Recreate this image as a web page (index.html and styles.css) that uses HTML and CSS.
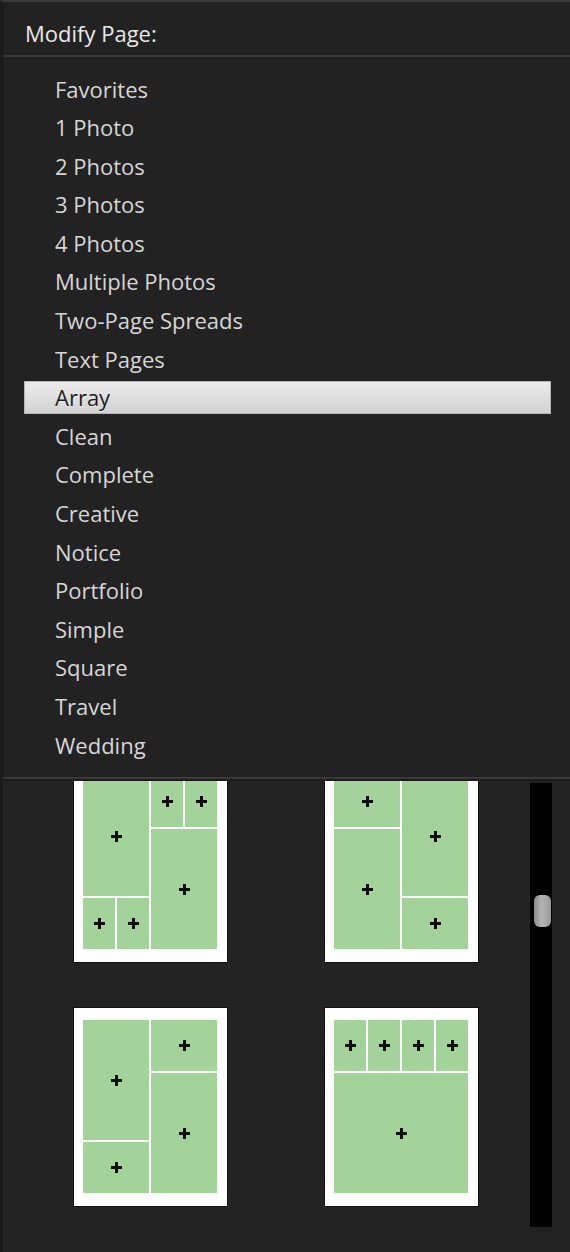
FILE: index.html
```html
<!DOCTYPE html>
<html lang="en">
<head>
    <meta charset="UTF-8">
    <title>Modify Page</title>
    <link rel="stylesheet" href="styles.css">
</head>
<body>
    <div class="window">

        <!-- Page layout thumbnails (scrolled, partly under the menu) -->
        <div class="browser">
            <div class="pages">
                <div class="page">
                    <div class="layout cols4">
                        <div class="cell" style="grid-column: 1 / 3; grid-row: 1 / 3;"></div>
                        <div class="cell" style="grid-column: 3; grid-row: 1;"></div>
                        <div class="cell" style="grid-column: 4; grid-row: 1;"></div>
                        <div class="cell" style="grid-column: 3 / 5; grid-row: 2 / 4;"></div>
                        <div class="cell" style="grid-column: 1; grid-row: 3;"></div>
                        <div class="cell" style="grid-column: 2; grid-row: 3;"></div>
                    </div>
                </div>
                <div class="page">
                    <div class="layout cols2">
                        <div class="cell" style="grid-column: 1; grid-row: 1;"></div>
                        <div class="cell" style="grid-column: 1; grid-row: 2 / 4;"></div>
                        <div class="cell" style="grid-column: 2; grid-row: 1 / 3;"></div>
                        <div class="cell" style="grid-column: 2; grid-row: 3;"></div>
                    </div>
                </div>
                <div class="page">
                    <div class="layout cols2">
                        <div class="cell" style="grid-column: 1; grid-row: 1 / 3;"></div>
                        <div class="cell" style="grid-column: 1; grid-row: 3;"></div>
                        <div class="cell" style="grid-column: 2; grid-row: 1;"></div>
                        <div class="cell" style="grid-column: 2; grid-row: 2 / 4;"></div>
                    </div>
                </div>
                <div class="page">
                    <div class="layout cols4">
                        <div class="cell" style="grid-column: 1; grid-row: 1;"></div>
                        <div class="cell" style="grid-column: 2; grid-row: 1;"></div>
                        <div class="cell" style="grid-column: 3; grid-row: 1;"></div>
                        <div class="cell" style="grid-column: 4; grid-row: 1;"></div>
                        <div class="cell" style="grid-column: 1 / 5; grid-row: 2 / 4;"></div>
                    </div>
                </div>
            </div>

            <div class="scrollbar">
                <div class="scroll-thumb"></div>
            </div>
        </div>

        <!-- Modify Page popup menu -->
        <div class="menu">
            <div class="menu-title">Modify Page:</div>
            <ul class="menu-list">
                <li>Favorites</li>
                <li>1 Photo</li>
                <li>2 Photos</li>
                <li>3 Photos</li>
                <li>4 Photos</li>
                <li>Multiple Photos</li>
                <li>Two-Page Spreads</li>
                <li>Text Pages</li>
                <li class="selected">Array</li>
                <li>Clean</li>
                <li>Complete</li>
                <li>Creative</li>
                <li>Notice</li>
                <li>Portfolio</li>
                <li>Simple</li>
                <li>Square</li>
                <li>Travel</li>
                <li>Wedding</li>
            </ul>
        </div>

    </div>
</body>
</html>
```

FILE: styles.css
```css
body {
    margin: 0;
    background-color: #1d1d1d;
    font-family: "Open Sans", "Noto Sans", sans-serif;
}

.window {
    position: relative;
    height: 1250px;
    border-top: 2px solid #3a3a3a;
    border-left: 3px solid #1b1b1b;
    background-color: #232323;
    overflow: hidden;
}

/* thumbnails */

.browser {
    display: flex;
    align-items: flex-start;
    padding-top: 761px;
}

.pages {
    display: grid;
    grid-template-columns: 155px 155px;
    column-gap: 96px;
    row-gap: 44px;
    padding-left: 70px;
}

.page {
    box-sizing: border-box;
    width: 155px;
    height: 200px;
    background-color: #fff;
    border: 1px solid #111;
    padding: 12px 10px 13px 9px;
}

.layout {
    display: grid;
    height: 100%;
    gap: 2px;
    grid-template-rows: 51px 1fr 51px;
}

.cols4 {
    grid-template-columns: repeat(4, 1fr);
}

.cols2 {
    grid-template-columns: repeat(2, 1fr);
}

.cell {
    background-color: #a3d29b;
    display: flex;
    align-items: center;
    justify-content: center;
}

.cell::after {
    content: "";
    width: 11px;
    height: 11px;
    background:
        linear-gradient(#0d0d0d, #0d0d0d) center / 11px 3px no-repeat,
        linear-gradient(#0d0d0d, #0d0d0d) center / 3px 11px no-repeat;
}

.scrollbar {
    width: 22px;
    height: 444px;
    margin-top: 20px;
    margin-left: 51px;
    background-color: #000;
    position: relative;
}

.scroll-thumb {
    position: absolute;
    top: 112px;
    left: 4px;
    width: 17px;
    height: 32px;
    border-radius: 6px;
    background: linear-gradient(to right, #8a8a8a, #b4b4b4 45%, #9a9a9a);
}

/* popup menu */

.menu {
    position: absolute;
    top: 0;
    left: 0;
    right: 0;
    background-color: #222;
    border-bottom: 2px solid #3a3a3a;
    border-top-left-radius: 6px;
    box-shadow: inset 1px 0 0 #1a1a1a, 0 2px 0 #1a1a1a;
}

.menu-title {
    height: 55px;
    box-sizing: border-box;
    padding: 17px 0 0 22px;
    line-height: 28px;
    font-size: 22px;
    color: #e8e8e8;
    border-bottom: 2px solid #3a3a3a;
}

.menu-list {
    list-style: none;
    margin: 0;
    padding: 15.5px 0 15.3px 0;
    display: flex;
    flex-direction: column;
    gap: 5.6px;
}

.menu-list li {
    height: 33px;
    line-height: 33px;
    margin: 0 19px 0 21px;
    padding-left: 31px;
    font-size: 22px;
    color: #d6d6d6;
    box-sizing: border-box;
}

.menu-list li.selected {
    background: linear-gradient(#ececec, #d2d2d2);
    border: 1px solid #b5b5b5;
    line-height: 31px;
    padding-left: 30px;
    color: #1e1e1e;
    text-shadow: 0 1px 0 rgba(255, 255, 255, 0.5);
}
```
